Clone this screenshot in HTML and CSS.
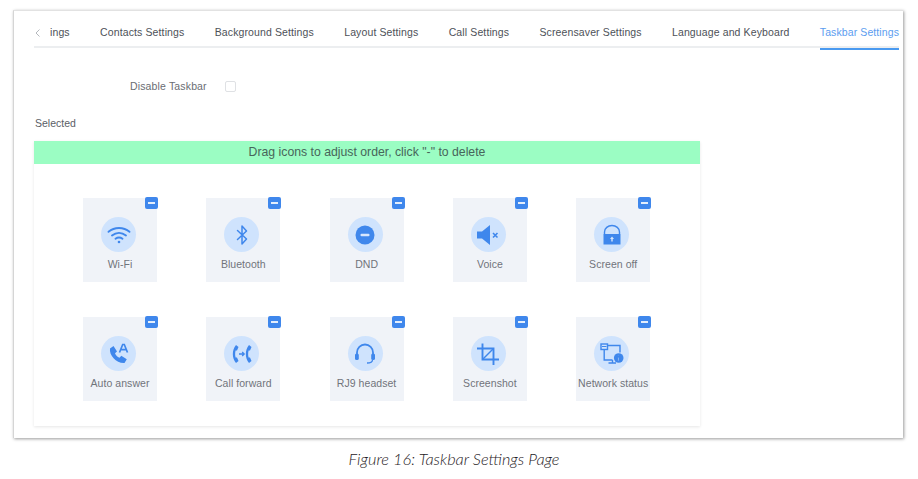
FILE: index.html
```html
<!DOCTYPE html>
<html lang="en">
<head>
<meta charset="utf-8">
<title>Taskbar Settings</title>
<link rel="stylesheet" href="styles.css">
</head>
<body>
<main class="frame">
  <nav class="tabs">
    <svg class="chev" width="6" height="10" viewBox="0 0 6 10"><path d="M4.500 1.500 1 5l3.500 3.500" fill="none" stroke="#b4b8bd" stroke-width="1"/></svg>
    <span class="tab">ings</span>
    <span class="tab">Contacts Settings</span>
    <span class="tab">Background Settings</span>
    <span class="tab">Layout Settings</span>
    <span class="tab">Call Settings</span>
    <span class="tab">Screensaver Settings</span>
    <span class="tab">Language and Keyboard</span>
    <span class="tab tab-active">Taskbar Settings</span>
  </nav>
  <div class="option">
    <span class="option-label">Disable Taskbar</span>
    <span class="checkbox"></span>
  </div>
  <div class="selected-label">Selected</div>
  <section class="card">
    <div class="hint">Drag icons to adjust order, click "-" to delete</div>
    <div class="grid">
      <div class="tile"><span class="badge"></span><span class="circle">
        <svg viewBox="0 0 24 24" width="24" height="24" fill="none" stroke="#3f87ec" stroke-width="1.9" stroke-linecap="round"><path d="M1.500 8.800c6-5 15-5 21 0"/><path d="M5 12.400c4.200-3.300 9.800-3.300 14 0"/><path d="M8.500 15.800c2.200-1.600 4.800-1.600 7 0"/><circle cx="12" cy="19" r="1.300" fill="#3f87ec" stroke="none"/></svg>
      </span><span class="name">Wi-Fi</span></div>
      <div class="tile"><span class="badge"></span><span class="circle">
        <svg viewBox="0 0 24 24" width="24" height="24" fill="none" stroke="#3f87ec" stroke-width="1.500" stroke-linejoin="round" stroke-linecap="round"><path d="M7.500 7.500 16.500 16 12 21V3l4.500 5-9 8.500"/></svg>
      </span><span class="name">Bluetooth</span></div>
      <div class="tile"><span class="badge"></span><span class="circle">
        <svg viewBox="0 0 24 24" width="24" height="24"><circle cx="12" cy="12" r="9.500" fill="#3f87ec"/><rect x="7.500" y="10.800" width="9" height="2.400" rx="1" fill="#d6e6fd"/></svg>
      </span><span class="name">DND</span></div>
      <div class="tile"><span class="badge"></span><span class="circle">
        <svg viewBox="0 0 24 24" width="24" height="24"><path d="M1 8.500h5L14 2v20l-8-6.500H1z" fill="#3f87ec"/><path d="m17 10 4.500 4.500m0-4.500L17 14.500" stroke="#3f87ec" stroke-width="1.600" fill="none"/></svg>
      </span><span class="name">Voice</span></div>
      <div class="tile"><span class="badge"></span><span class="circle">
        <svg viewBox="0 0 24 24" width="24" height="24"><path d="M4.500 11V9a7.500 6.500 0 0 1 15 0v2" fill="none" stroke="#3f87ec" stroke-width="1.400"/><rect x="3.500" y="11" width="17" height="10.500" fill="#3f87ec"/><path d="M12 13.500 10 16h1.300v2.500h1.400V16H14z" fill="#d6e6fd"/></svg>
      </span><span class="name">Screen off</span></div>

      <div class="tile"><span class="badge"></span><span class="circle">
        <svg viewBox="0 0 24 24" width="24" height="24"><path d="M3 6.500 6.500 4l3.500 5.500-2 1.800c.8 2 2.400 3.600 4.500 4.500l1.800-2 5.500 3.500L17.500 21C9.500 21.500 2 13.500 3 6.500z" fill="#3f87ec"/><path d="m12.500 10.500 3.200-8h1.600l3.200 8m-6.700-2.800h6" fill="none" stroke="#3f87ec" stroke-width="1.700"/></svg>
      </span><span class="name">Auto answer</span></div>
      <div class="tile"><span class="badge"></span><span class="circle">
        <svg viewBox="0 0 24 24" width="24" height="24"><path d="M6 3C1.800 8 1.800 16 6 21l2.500-2L7 15.500H5.600C5 13 5 11 5.600 8.500H7L8.500 5z" fill="#3f87ec"/><path d="M19 3c-4.200 5-4.200 13 0 18l2.500-2-1.500-3.500h-1.400c-.6-2.500-.6-4.500 0-7H20L21.500 5z" fill="#3f87ec"/><path d="M9 12h5m-1.800-2L14.200 12l-2 2" fill="none" stroke="#3f87ec" stroke-width="1.300"/></svg>
      </span><span class="name">Call forward</span></div>
      <div class="tile"><span class="badge"></span><span class="circle">
        <svg viewBox="0 0 24 24" width="24" height="24" fill="none" stroke="#3f87ec" stroke-width="1.800"><path d="M4 14v-3.500a8 8 0 0 1 16 0V14"/><rect x="2" y="11.500" width="3.800" height="6.500" rx="1.600" fill="#3f87ec" stroke="none"/><rect x="18.200" y="11.500" width="3.800" height="6.500" rx="1.600" fill="#3f87ec" stroke="none"/><path d="M19.500 18c0 2-2 3-5.500 3" stroke-width="1.300"/></svg>
      </span><span class="name">RJ9 headset</span></div>
      <div class="tile"><span class="badge"></span><span class="circle">
        <svg viewBox="0 0 24 24" width="24" height="24" fill="none" stroke="#3f87ec" stroke-width="1.900"><path d="M6.500 1.500v16h16.500"/><path d="M1 6.500h16.500V23"/><path d="M17 7 7 17" stroke-width="1.500"/></svg>
      </span><span class="name">Screenshot</span></div>
      <div class="tile"><span class="badge"></span><span class="circle">
        <svg viewBox="0 0 24 24" width="24" height="24" fill="none" stroke="#3f87ec" stroke-width="1.400"><rect x="1" y="2" width="6.500" height="5.500"/><path d="M7.500 3.500h12.500v7M4.200 7.500V18h8.300M8.500 21h7.500M12.500 18v3"/><path d="M2 4.500h4.500" stroke-width="1"/><circle cx="18.700" cy="16" r="4.800" fill="#3f87ec" stroke="none"/><rect x="17.800" y="12.800" width="1.800" height="1.600" fill="#d6e6fd"/><rect x="17.800" y="15" width="1.800" height="4.200" fill="#d6e6fd"/></svg>
      </span><span class="name">Network status</span></div>
    </div>
  </section>
</main>
<p class="caption">Figure 16: Taskbar Settings Page</p>
</body>
</html>
```
FILE: styles.css
```css
* { box-sizing: border-box; }
html, body { margin: 0; padding: 0; background: #fff; }
body { width: 918px; height: 479px; overflow: hidden; font-family: "Liberation Sans", Arial, sans-serif; }

.frame {
  width: 890px;
  height: 428px;
  margin: 10px 0 0 13px;
  padding: 0 4px 0 20px;
  background: #fff;
  border-top: 1px solid #e2e2e2;
  border-left: 1px solid #d5d5d5;
  box-shadow: 1px 1px 3px rgba(0, 0, 0, .4);
}

.tabs {
  display: flex;
  align-items: center;
  height: 37px;
  padding-top: 4px;
  border-bottom: 2px solid #eceef0;
  font-size: 10.5px;
  color: #4d5158;
  white-space: nowrap;
}
.chev { margin: 4px 9px 0 1px; flex: none; }
.tab { margin-right: 30.3px; line-height: 38px; height: 35px; letter-spacing: .12px; }
.tab-active {
  margin: 0 0 -2px;
  height: 37px;
  color: #5b9df0;
  border-bottom: 2px solid #4a9af0;
  letter-spacing: .1px;
}

.option {
  display: flex;
  align-items: center;
  height: 14px;
  margin: 31px 0 0 96px;
  font-size: 10.5px;
  color: #6a6d73;
}
.option-label { letter-spacing: .15px; }
.checkbox {
  width: 11px;
  height: 11px;
  margin-left: 18px;
  border: 1px solid #dfe1e4;
  border-radius: 2px;
}

.selected-label {
  margin: 23px 0 0 1px;
  font-size: 10.5px;
  line-height: 14px;
  color: #5a5e66;
}

.card {
  width: 666px;
  height: 285px;
  margin-top: 11px;
  box-shadow: 0 1px 3px rgba(0, 0, 0, .1);
}
.hint {
  height: 23px;
  background: #9bfdc3;
  text-align: center;
  font-size: 12.25px;
  line-height: 23px;
  color: #47655a;
}
.grid {
  display: grid;
  grid-template-columns: repeat(5, 74px);
  grid-auto-rows: 84px;
  column-gap: 49.3px;
  row-gap: 35px;
  padding: 34px 0 0 49px;
}
.tile {
  position: relative;
  display: flex;
  flex-direction: column;
  align-items: center;
  padding-top: 19px;
  background: #f0f3f8;
}
.badge {
  position: absolute;
  top: -1px;
  right: -1px;
  width: 13px;
  height: 12px;
  border-radius: 2px;
  background: #3f87ec;
}
.badge::after {
  content: "";
  position: absolute;
  left: 3px;
  top: 5px;
  width: 7px;
  height: 2px;
  background: #e4eefc;
}
.circle {
  display: flex;
  align-items: center;
  justify-content: center;
  width: 35px;
  height: 35px;
  margin-right: 3px;
  border-radius: 50%;
  background: #cfe3fd;
}
.name {
  margin-top: 5px;
  font-size: 10.5px;
  line-height: 14px;
  letter-spacing: .05px;
  color: #70747b;
  white-space: nowrap;
}

.caption {
  margin: 11px 0 0;
  padding-right: 10px;
  text-align: center;
  font-family: Lato, sans-serif;
  font-style: italic;
  font-weight: 300;
  font-size: 16.3px;
  line-height: 20px;
  color: #1f2226;
}
```
